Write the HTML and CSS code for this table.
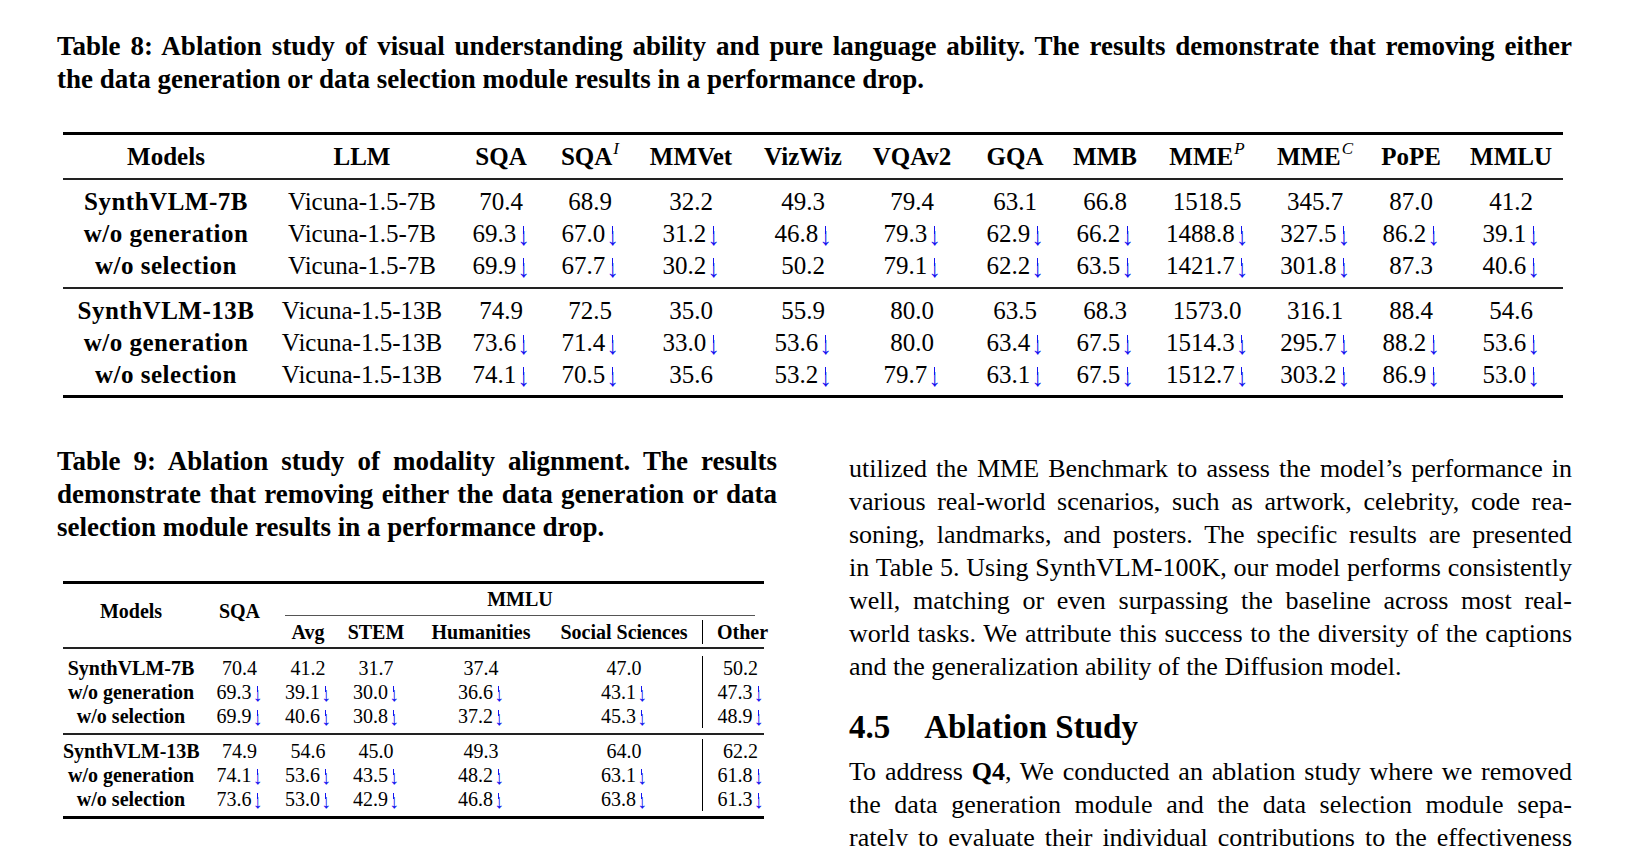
FILE: index.html
```html
<!DOCTYPE html>
<html lang="en">
<head>
<meta charset="utf-8">
<title>Ablation study tables</title>
<link rel="stylesheet" href="styles.css">
</head>
<body>
<div class="page">
  <p class="caption">
    <span class="ln">Table 8: Ablation study of visual understanding ability and pure language ability. The results demonstrate that removing either</span>
    <span class="ln end">the data generation or data selection module results in a performance drop.</span>
  </p>

  <table class="t8">
    <colgroup>
      <col class="w206"><col class="w186"><col class="w92"><col class="w86"><col class="w116"><col class="w108"><col class="w110"><col class="w96"><col class="w84"><col class="w120"><col class="w96"><col class="w96"><col class="w104">
    </colgroup>
    <thead>
      <tr>
        <th>Models</th><th>LLM</th><th>SQA</th><th>SQA<span class="sup">I</span></th><th>MMVet</th><th>VizWiz</th><th>VQAv2</th><th>GQA</th><th>MMB</th><th>MME<span class="sup">P</span></th><th>MME<span class="sup">C</span></th><th>PoPE</th><th>MMLU</th>
      </tr>
    </thead>
    <tbody>
      <tr><td class="m">SynthVLM-7B</td><td>Vicuna-1.5-7B</td><td>70.4</td><td>68.9</td><td>32.2</td><td>49.3</td><td>79.4</td><td>63.1</td><td>66.8</td><td>1518.5</td><td>345.7</td><td>87.0</td><td>41.2</td></tr>
      <tr><td class="m">w/o generation</td><td>Vicuna-1.5-7B</td><td>69.3<span class="dn">↓</span></td><td>67.0<span class="dn">↓</span></td><td>31.2<span class="dn">↓</span></td><td>46.8<span class="dn">↓</span></td><td>79.3<span class="dn">↓</span></td><td>62.9<span class="dn">↓</span></td><td>66.2<span class="dn">↓</span></td><td>1488.8<span class="dn">↓</span></td><td>327.5<span class="dn">↓</span></td><td>86.2<span class="dn">↓</span></td><td>39.1<span class="dn">↓</span></td></tr>
      <tr><td class="m">w/o selection</td><td>Vicuna-1.5-7B</td><td>69.9<span class="dn">↓</span></td><td>67.7<span class="dn">↓</span></td><td>30.2<span class="dn">↓</span></td><td>50.2</td><td>79.1<span class="dn">↓</span></td><td>62.2<span class="dn">↓</span></td><td>63.5<span class="dn">↓</span></td><td>1421.7<span class="dn">↓</span></td><td>301.8<span class="dn">↓</span></td><td>87.3</td><td>40.6<span class="dn">↓</span></td></tr>
    </tbody>
    <tbody>
      <tr><td class="m">SynthVLM-13B</td><td>Vicuna-1.5-13B</td><td>74.9</td><td>72.5</td><td>35.0</td><td>55.9</td><td>80.0</td><td>63.5</td><td>68.3</td><td>1573.0</td><td>316.1</td><td>88.4</td><td>54.6</td></tr>
      <tr><td class="m">w/o generation</td><td>Vicuna-1.5-13B</td><td>73.6<span class="dn">↓</span></td><td>71.4<span class="dn">↓</span></td><td>33.0<span class="dn">↓</span></td><td>53.6<span class="dn">↓</span></td><td>80.0</td><td>63.4<span class="dn">↓</span></td><td>67.5<span class="dn">↓</span></td><td>1514.3<span class="dn">↓</span></td><td>295.7<span class="dn">↓</span></td><td>88.2<span class="dn">↓</span></td><td>53.6<span class="dn">↓</span></td></tr>
      <tr><td class="m">w/o selection</td><td>Vicuna-1.5-13B</td><td>74.1<span class="dn">↓</span></td><td>70.5<span class="dn">↓</span></td><td>35.6</td><td>53.2<span class="dn">↓</span></td><td>79.7<span class="dn">↓</span></td><td>63.1<span class="dn">↓</span></td><td>67.5<span class="dn">↓</span></td><td>1512.7<span class="dn">↓</span></td><td>303.2<span class="dn">↓</span></td><td>86.9<span class="dn">↓</span></td><td>53.0<span class="dn">↓</span></td></tr>
    </tbody>
  </table>

  <div class="cols">
    <div class="left">
      <p class="caption">
        <span class="ln">Table 9: Ablation study of modality alignment. The results</span>
        <span class="ln">demonstrate that removing either the data generation or data</span>
        <span class="ln end">selection module results in a performance drop.</span>
      </p>

      <table class="t9">
        <colgroup>
          <col class="w136"><col class="w81"><col class="w56"><col class="w80"><col class="w130"><col class="w156"><col class="w62">
        </colgroup>
        <thead>
          <tr>
            <th rowspan="2" class="rs">Models</th>
            <th rowspan="2" class="rs">SQA</th>
            <th colspan="5" class="grp"><div class="cmid">MMLU</div></th>
          </tr>
          <tr class="sub">
            <th>Avg</th><th>STEM</th><th>Humanities</th><th>Social Sciences</th><th class="oth"><div class="bar">Other</div></th>
          </tr>
        </thead>
        <tbody>
          <tr><td class="m">SynthVLM-7B</td><td>70.4</td><td>41.2</td><td>31.7</td><td>37.4</td><td>47.0</td><td class="oth"><div class="bar">50.2</div></td></tr>
          <tr><td class="m">w/o generation</td><td>69.3<span class="dn">↓</span></td><td>39.1<span class="dn">↓</span></td><td>30.0<span class="dn">↓</span></td><td>36.6<span class="dn">↓</span></td><td>43.1<span class="dn">↓</span></td><td class="oth"><div class="bar">47.3<span class="dn">↓</span></div></td></tr>
          <tr><td class="m">w/o selection</td><td>69.9<span class="dn">↓</span></td><td>40.6<span class="dn">↓</span></td><td>30.8<span class="dn">↓</span></td><td>37.2<span class="dn">↓</span></td><td>45.3<span class="dn">↓</span></td><td class="oth"><div class="bar">48.9<span class="dn">↓</span></div></td></tr>
        </tbody>
        <tbody>
          <tr><td class="m">SynthVLM-13B</td><td>74.9</td><td>54.6</td><td>45.0</td><td>49.3</td><td>64.0</td><td class="oth"><div class="bar">62.2</div></td></tr>
          <tr><td class="m">w/o generation</td><td>74.1<span class="dn">↓</span></td><td>53.6<span class="dn">↓</span></td><td>43.5<span class="dn">↓</span></td><td>48.2<span class="dn">↓</span></td><td>63.1<span class="dn">↓</span></td><td class="oth"><div class="bar">61.8<span class="dn">↓</span></div></td></tr>
          <tr><td class="m">w/o selection</td><td>73.6<span class="dn">↓</span></td><td>53.0<span class="dn">↓</span></td><td>42.9<span class="dn">↓</span></td><td>46.8<span class="dn">↓</span></td><td>63.8<span class="dn">↓</span></td><td class="oth"><div class="bar">61.3<span class="dn">↓</span></div></td></tr>
        </tbody>
      </table>
    </div>

    <div class="right">
      <p class="body">
        <span class="ln">utilized the MME Benchmark to assess the model’s performance in</span>
        <span class="ln">various real-world scenarios, such as artwork, celebrity, code rea-</span>
        <span class="ln">soning, landmarks, and posters. The specific results are presented</span>
        <span class="ln">in Table 5. Using SynthVLM-100K, our model performs consistently</span>
        <span class="ln">well, matching or even surpassing the baseline across most real-</span>
        <span class="ln">world tasks. We attribute this success to the diversity of the captions</span>
        <span class="ln end">and the generalization ability of the Diffusion model.</span>
      </p>
      <h2 class="sec"><span class="secnum">4.5</span>Ablation Study</h2>
      <p class="body">
        <span class="ln">To address <b>Q4</b>, We conducted an ablation study where we removed</span>
        <span class="ln">the data generation module and the data selection module sepa-</span>
        <span class="ln">rately to evaluate their individual contributions to the effectiveness</span>
      </p>
    </div>
  </div>
</div>
</body>
</html>
```

FILE: styles.css
```css
html, body {
  margin: 0;
  padding: 0;
  background: #ffffff;
}

body {
  color: #000000;
  font-family: "Liberation Serif", "Times New Roman", "DejaVu Serif", serif;
  overflow: hidden;
}

.page {
  width: 1515px;
  padding: 30px 0 0 57px;
}

/* ---------- text blocks ---------- */
.caption {
  margin: 0;
  font-weight: bold;
  font-size: 27px;
  line-height: 33px;
}

.body {
  margin: 0;
  font-size: 26px;
  line-height: 33px;
}

.ln {
  display: block;
  text-align: justify;
  text-align-last: justify;
}

.ln.end {
  text-align-last: left;
}

.sec {
  margin: 24px 0 8px 0;
  font-size: 33px;
  line-height: 40px;
  font-weight: bold;
}

.secnum {
  display: inline-block;
  margin-right: 34px;
}

/* ---------- shared table bits ---------- */
table {
  border-collapse: separate;
  border-spacing: 0;
  table-layout: fixed;
}

th, td {
  padding: 0;
  text-align: center;
  white-space: nowrap;
}

.m {
  font-weight: bold;
}

/* blue "decrease" arrow: real glyph, with its shaft lengthened */
.dn {
  position: relative;
  top: 0.1em;
  color: #1414f0;
  font-family: "Liberation Serif", "DejaVu Serif", serif;
  font-weight: normal;
  margin-left: 1px;
}

.dn::before {
  content: "";
  position: absolute;
  left: 50%;
  top: 0.13em;
  height: 0.34em;
  margin-left: -0.6px;
  border-left: 1.3px solid currentColor;
}

.sup {
  font-size: 0.68em;
  font-style: italic;
  font-weight: normal;
  vertical-align: 0.62em;
  line-height: 0;
  margin-left: 1px;
}

/* ---------- table 8 ---------- */
.t8 {
  width: 1500px;
  margin: 36px 0 0 6px;
  font-size: 25px;
}

.t8 th {
  line-height: 43px;
  border-top: 3px solid #000;
  border-bottom: 2px solid #222;
}

.t8 td {
  line-height: 32px;
}

.t8 .m {
  letter-spacing: 0.5px;
}

.t8 tbody tr:first-child td { padding-top: 6px; }
.t8 tbody tr:last-child td { padding-bottom: 5px; }
.t8 tbody + tbody tr:first-child td { border-top: 2px solid #222; }
.t8 tbody:last-child tr:last-child td {
  padding-bottom: 4px;
  border-bottom: 3px solid #000;
}

.w206 { width: 206px; }
.w186 { width: 186px; }
.w92 { width: 92px; }
.w86 { width: 86px; }
.w116 { width: 116px; }
.w108 { width: 108px; }
.w110 { width: 110px; }
.w96 { width: 96px; }
.w84 { width: 84px; }
.w120 { width: 120px; }
.w104 { width: 104px; }

/* ---------- two columns ---------- */
.cols {
  display: grid;
  grid-template-columns: 720px 723px;
  column-gap: 72px;
  margin-top: 47px;
}

.right {
  padding-top: 7px;
}

/* ---------- table 9 ---------- */
.t9 {
  width: 701px;
  margin: 37px 0 0 6px;
  font-size: 20px;
}

.w136 { width: 136px; }
.w81 { width: 81px; }
.w56 { width: 56px; }
.w80 { width: 80px; }
.w130 { width: 130px; }
.w156 { width: 156px; }
.w62 { width: 62px; }

.t9 th {
  line-height: 24px;
}

.t9 th.rs {
  border-top: 3px solid #000;
  border-bottom: 2px solid #222;
  padding-bottom: 10px;
  vertical-align: middle;
}

.t9 th.grp {
  border-top: 3px solid #000;
}

.cmid {
  line-height: 31px;
  margin: 0 9px 0 5px;
  border-bottom: 1px solid #555;
}

.t9 tr.sub th {
  padding-top: 4px;
  padding-bottom: 3px;
  border-bottom: 2px solid #222;
}

.t9 td {
  line-height: 24px;
}

.t9 .oth {
  text-align: left;
}

.bar {
  border-left: 1px solid #000;
  padding-left: 14px;
  text-align: center;
}

.t9 tbody tr:first-child td { padding-top: 7px; }
.t9 tbody tr:last-child td { padding-bottom: 5px; }
.t9 tbody + tbody tr:first-child td {
  padding-top: 4px;
  border-top: 2px solid #222;
}
.t9 tbody:last-child tr:last-child td {
  border-bottom: 3px solid #000;
}
```
